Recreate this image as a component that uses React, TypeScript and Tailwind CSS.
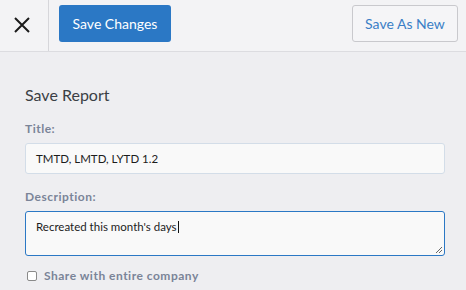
import React from "react";

export default function App() {
  return (
    <div className="w-[466px] h-[290px] bg-[#eeeef1] overflow-hidden" style={{ fontFamily: "Lato, 'Open Sans', sans-serif" }}>
      <div className="h-[52px] flex items-stretch bg-[#f3f3f5] border-b border-[#dcdce0]">
        <div className="w-[49px] flex items-center pl-[14px] border-r border-[#d6d6da]">
          <svg width="16" height="16" viewBox="0 0 16 16" className="-mt-[1px]">
            <path d="M1 1 L15 15 M15 1 L1 15" stroke="#1b1b1b" strokeWidth="2" strokeLinecap="butt" />
          </svg>
        </div>
        <div className="flex-1 flex items-start justify-between pt-[5px] pl-[10px] pr-[8px]">
          <button className="h-[37px] w-[112px] rounded-[3px] bg-[#2b78c5] text-white text-[14px] flex items-center justify-center">Save Changes</button>
          <button className="h-[37px] w-[106px] rounded-[3px] border border-[#c9c9cd] bg-[#f5f5f7] text-[#3a7fc6] text-[14px] flex items-center justify-center">Save As New</button>
        </div>
      </div>
      <div className="px-[25px] pt-[33px]">
        <div className="text-[16px] leading-[20px] text-[#3b3f45]">Save Report</div>
        <div className="mt-[17px] text-[12px] leading-[14px] font-bold tracking-[0.5px] text-[#7a8498]">Title:</div>
        <div className="mt-[7px] h-[31px] w-[420px] rounded-[3px] border border-[#d3dde8] bg-[#f9f9f9] flex items-center pl-[10px] text-[11.5px] text-[#1c1c1c]">TMTD, LMTD, LYTD 1.2</div>
        <div className="mt-[16px] text-[12px] leading-[14px] font-bold tracking-[0.5px] text-[#7a8498]">Description:</div>
        <div className="mt-[7px] relative h-[45px] w-[420px] rounded-[3px] border border-[#2b78c5] bg-[#f9f9f9] pl-[10px] pt-[8px] text-[11.5px] leading-[14px] text-[#1c1c1c]">
          <span>Recreated this month's days</span><span className="inline-block w-[1px] h-[12px] bg-[#111] align-middle ml-[1px] -mt-[2px]"></span>
          <svg width="8" height="8" viewBox="0 0 8 8" className="absolute right-[1px] bottom-[1px]">
            <path d="M7 1 L1 7 M7 4 L4 7" stroke="#666" strokeWidth="1" />
          </svg>
        </div>
        <div className="mt-[12px] h-[16px] flex items-center">
          <div className="ml-[2px] w-[10px] h-[10px] rounded-[2px] border border-[#8a8a8a] bg-white"></div>
          <span className="ml-[7px] text-[12px] font-bold tracking-[0.5px] text-[#7a8498]">Share with entire company</span>
        </div>
      </div>
    </div>
  );
}
